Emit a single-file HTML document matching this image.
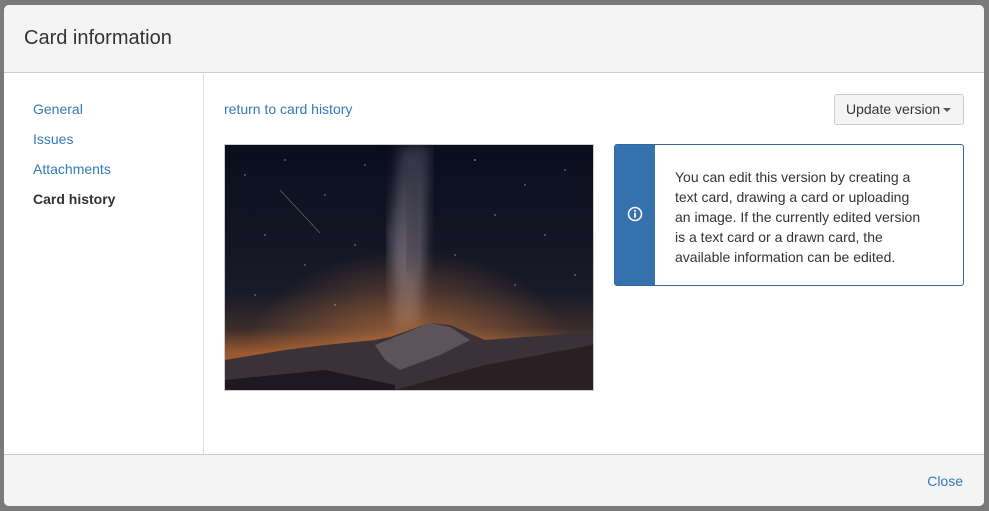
<!DOCTYPE html>
<html><head><meta charset="utf-8"><style>
*{box-sizing:border-box;margin:0;padding:0}
html,body{width:989px;height:511px;overflow:hidden;background:#7a7a7a;font-family:"Liberation Sans",Arial,sans-serif;font-size:14px;color:#333}
.modal{position:absolute;left:4px;top:5px;width:980px;height:501px;background:#fff;border-radius:5px;overflow:hidden}
.hd{height:68px;background:#f4f4f4;border-bottom:1px solid #ccc;padding:21px 20px}
.hd h1{font-size:20px;font-weight:normal;color:#333;line-height:24px}
.side{position:absolute;left:0;top:69px;width:200px;height:380px;border-right:1px solid #ddd}
.side a{position:absolute;left:29px;color:#337ab7;text-decoration:none;font-size:14px}
.side b{position:absolute;left:29px;color:#333;font-size:14px}
.ft{position:absolute;left:0;top:449px;width:980px;height:52px;background:#f4f4f4;border-top:1px solid #ccc}
.ft a{position:absolute;right:21px;top:18px;color:#337ab7;font-size:14px}
.link{position:absolute;left:220px;top:96px;color:#337ab7}
.btn{position:absolute;left:830px;top:89px;width:130px;height:31px;border:1px solid #ccc;border-radius:3px;background:#f4f4f4;font-size:14px;line-height:29px;padding-left:11px;color:#333}
.btn i{position:absolute;right:12px;top:13px;border-left:4px solid transparent;border-right:4px solid transparent;border-top:4px solid #555}
.img{position:absolute;left:220px;top:139px;width:370px;height:247px;border:1px solid #ccc}
.info{position:absolute;left:610px;top:139px;width:350px;height:142px;border:1px solid #31669e;border-radius:3px;overflow:hidden}
.info .bar{position:absolute;left:0;top:0;width:40px;height:100%;background:#3571ad}
.info p{position:absolute;left:60px;top:22px;width:248px;font-size:14px;line-height:20px;color:#333}
</style></head><body>
<div class="modal">
<div class="hd"><h1>Card information</h1></div>
<div class="side">
<a style="top:27px">General</a>
<a style="top:57px">Issues</a>
<a style="top:87px">Attachments</a>
<b style="top:117px">Card history</b>
</div>
<a class="link">return to card history</a>
<div class="btn">Update version<i></i></div>
<div class="img"><svg width="368" height="245" viewBox="0 0 368 245">
<defs>
<linearGradient id="sky" x1="0" y1="0" x2="0" y2="1"><stop offset="0" stop-color="#0a0d1c"/><stop offset=".6" stop-color="#181a28"/><stop offset=".75" stop-color="#3a2c2c"/><stop offset=".85" stop-color="#9a5a30"/></linearGradient>
<radialGradient id="glow" cx=".5" cy=".88" r=".45"><stop offset="0" stop-color="#d88040" stop-opacity=".7"/><stop offset="1" stop-color="#d88040" stop-opacity="0"/></radialGradient>
<linearGradient id="mw" x1="0" y1="0" x2="0" y2="1"><stop offset="0" stop-color="#9a98b0" stop-opacity=".25"/><stop offset=".6" stop-color="#c8b8c0" stop-opacity=".45"/><stop offset="1" stop-color="#e0b090" stop-opacity=".25"/></linearGradient>
<filter id="bl"><feGaussianBlur stdDeviation="6"/></filter>
</defs>
<rect width="368" height="245" fill="url(#sky)"/>
<rect width="368" height="245" fill="url(#glow)"/>
<path d="M175 0 L205 0 L200 80 L195 180 L170 185 L165 90 Z" fill="url(#mw)" filter="url(#bl)"/>
<path d="M186 30 L192 30 L190 120 L182 130 Z" fill="#2a2530" opacity=".6" filter="url(#bl)"/>
<g fill="#fff" opacity=".6">
<circle cx="20" cy="30" r=".7"/><circle cx="60" cy="15" r=".7"/><circle cx="100" cy="50" r=".7"/><circle cx="140" cy="20" r=".7"/><circle cx="250" cy="15" r=".9"/><circle cx="300" cy="40" r=".7"/><circle cx="340" cy="25" r=".7"/><circle cx="320" cy="90" r=".7"/><circle cx="270" cy="70" r=".7"/><circle cx="40" cy="90" r=".7"/><circle cx="80" cy="120" r=".7"/><circle cx="130" cy="100" r=".7"/><circle cx="230" cy="110" r=".7"/><circle cx="350" cy="130" r=".7"/><circle cx="30" cy="150" r=".7"/><circle cx="110" cy="160" r=".7"/><circle cx="290" cy="140" r=".7"/>
</g>
<line x1="55" y1="45" x2="95" y2="88" stroke="#aaa" stroke-width=".6" opacity=".6"/>
<path d="M0 215 L60 205 L100 200 L150 195 L165 192 L185 185 L205 178 L225 180 L260 195 L300 192 L330 190 L368 185 L368 245 L0 245 Z" fill="#3a3236"/>
<path d="M150 200 L185 186 L205 178 L225 182 L245 195 L215 210 L175 225 L160 215 Z" fill="#6a6268" opacity=".7"/>
<path d="M170 245 L260 220 L368 200 L368 245 Z" fill="#2a2024"/>
<path d="M0 235 L100 225 L170 240 L170 245 L0 245 Z" fill="#1e1820"/>
</svg></div>
<div class="info"><div class="bar"><svg style="position:absolute;left:12px;top:61px" width="16" height="16" viewBox="0 0 16 16"><circle cx="8" cy="8" r="6.5" fill="none" stroke="#fff" stroke-width="1.6"/><rect x="7.1" y="6.8" width="1.8" height="4.8" fill="#fff"/><rect x="7.1" y="4" width="1.8" height="1.8" fill="#fff"/></svg></div>
<p>You can edit this version by creating a text card, drawing a card or uploading an image. If the currently edited version is a text card or a drawn card, the available information can be edited.</p></div>
<div class="ft"><a>Close</a></div>
</div>
</body></html>
